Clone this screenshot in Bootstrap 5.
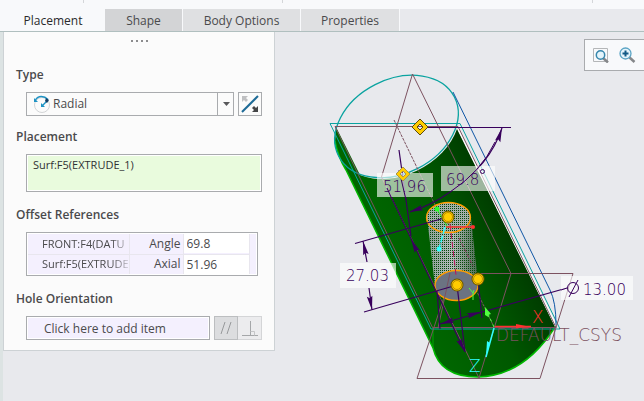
<!DOCTYPE html>
<html lang="en">
<head>
<meta charset="utf-8">
<meta name="viewport" content="width=device-width, initial-scale=1">
<title>Hole Placement</title>
<link rel="stylesheet" href="https://cdn.jsdelivr.net/npm/bootstrap@5.3.0/dist/css/bootstrap.min.css">
<style>
body{font-family:"Open Sans","Noto Sans",sans-serif;font-size:12px;line-height:16px;color:#4a4a4c;background:#e8e9ed}
.ribbon-edge{height:9px;background:#f8f9fb}
.ribbon-edge span{height:3px;border-right:1px solid #d4d6d9}
.g1{width:84px}.g2{width:199px}.g3{width:310px}
.dash-tabs{height:23px;padding-left:2px;gap:1px;border-bottom:1px solid #b0bfbf;box-shadow:inset 400px 0 #f8f9fb}
.dash-tabs .nav-link{height:22px;padding:0;border:0;border-radius:0;background:#dfe0e2;color:#4a4a4c;line-height:24px;width:98px}
.dash-tabs .nav-link.active{background:#f8f9fb;color:#2a2a2c;width:102px}
.dash-tabs .t-shape{background:#d3d4d6;width:77px}
.dash-tabs .t-body{width:117px}
.gutter{width:3px;background:#dce3e3}
.slide{width:272px;background:#fbfbfb;border:1px solid #cdd2d5;border-top:0;padding:0 12px 10px}
.grip{height:34px;padding-top:8px;gap:3px}
.grip i{width:2px;height:2px;background:#8c8c8e}
.sec{font-size:12px;font-weight:600;line-height:18px;margin:0 0 8px}
.sec-body{margin:0 0 14px 10px}
.sec-body.tight{margin-bottom:12px}
.sec-body:last-child{margin-bottom:0}
.ctl{border:1px solid #a9abae;border-radius:0;background:#fbfbfb;color:#4a4a4c;font-size:12px;line-height:16px;height:24px;padding:0}
.kind{padding-left:26px;appearance:none;outline:0}
.kind-icon{left:7px;top:3px}
.kind-arrow{right:0;top:0;width:17px;height:24px;border-left:1px solid #a9abae;pointer-events:none}
.sq{width:24px;flex:none}
.pick{height:38px;background:#e9fbdd;border:1px solid #a9abae;box-shadow:inset 0 0 0 1px #fff;padding:2px 6px;resize:none;font-size:11px;line-height:16px;color:#303234;overflow:hidden;border-radius:0}
.refs{border:1px solid #a9abae;margin-right:4px;padding:1px 7px 1px 1px;background:#f4f0fe;box-shadow:inset 0 0 0 1px #fff}
.refs table{table-layout:fixed}
.refs td,.refs th{height:20px;padding:0;border-right:1px solid #e8e6ee;border-bottom:1px solid #e8e6ee;font-weight:400}
.refs tr:last-child>*{border-bottom:0}
.refs th{padding-left:14px;width:101px;font-size:11px}
.refs .clip{display:block;white-space:nowrap;-webkit-mask-image:linear-gradient(90deg,#000 80%,#0003);mask-image:linear-gradient(90deg,#000 80%,#0003)}
.refs .dim{width:54px;text-align:right;padding-right:2px}
.refs input{width:100%;height:19px;border:0;padding:0 3px;background:#fff;color:#4a4a4c;display:block}
.orient{background:#f4f0fe;padding-left:17px;box-shadow:inset 0 0 0 1px #fff;min-width:0}
.par{background:#dcdddf;border-color:#bcbec0}
.perp{background:#ececee;border-color:#d4d5d7;border-left:0}
.view-tools{top:7px;right:0;height:32px;padding:0 8px;gap:10px;background:#f8f9fb;border:1px solid #a9abae;border-right:0}
.view-tools button{border:0;background:none;padding:0;line-height:0}
.dimtext text{font-family:"DejaVu Sans Light","DejaVu Sans",sans-serif;font-weight:200;font-size:15px}
.dimtext .axis{font-size:17px}
</style>
<script src="https://cdn.jsdelivr.net/npm/bootstrap@5.3.0/dist/js/bootstrap.bundle.min.js"></script>
</head>
<body class="vh-100 d-flex flex-column overflow-hidden">
<div class="ribbon-edge d-flex flex-shrink-0"><span class="g1"></span><span class="g2"></span><span class="g3"></span></div>
<nav class="nav dash-tabs flex-nowrap flex-shrink-0">
  <button type="button" class="nav-link active">Placement</button>
  <button type="button" class="nav-link t-shape">Shape</button>
  <button type="button" class="nav-link t-body">Body Options</button>
  <button type="button" class="nav-link">Properties</button>
</nav>
<main class="d-flex flex-grow-1 overflow-hidden">
  <div class="gutter flex-shrink-0"></div>
  <form class="slide flex-shrink-0 align-self-start">
    <div class="grip d-flex justify-content-center"><i></i><i></i><i></i><i></i></div>
    <label class="sec d-block" for="kind">Type</label>
    <div class="sec-body tight d-flex gap-1">
      <div class="position-relative flex-grow-1">
        <select id="kind" class="ctl kind w-100 d-block"><option>Radial</option></select>
        <svg class="kind-icon position-absolute" width="18" height="18" viewBox="0 0 18 18" fill="none" aria-hidden="true"><circle cx="9" cy="10" r="7.500" stroke="#d2d4d6"/><path d="M2.500 5C5 .5 11 .5 15 4.500" stroke="#1f93c4" stroke-width="1.500"/><path d="M1 3v4h4zM8 8v4h4z" fill="#1f93c4"/><path d="m9 11 5-5" stroke="#1f93c4" stroke-width="1.500"/><path d="m13 3 3 2-2 3-2-2z" fill="#123f66"/></svg>
        <span class="kind-arrow position-absolute d-flex align-items-center justify-content-center"><svg width="7" height="4" aria-hidden="true"><path d="M0 0h7L3.500 4z" fill="#58595b"/></svg></span>
      </div>
      <button type="button" class="ctl sq d-flex align-items-center justify-content-center" aria-label="Flip"><svg width="18" height="18" viewBox="0 0 18 18" aria-hidden="true"><path d="M1 17 17 1" stroke="#1d6a96" stroke-width="2"/><path d="M1 1h6L5 3l2 2-2 2-2-2-2 2z" fill="#bfc0c2"/><path d="M17 17h-6l2-2-2-2 2-2 2 2 2-2z" fill="#444547"/></svg></button>
    </div>
    <label class="sec d-block" for="place">Placement</label>
    <div class="sec-body"><textarea id="place" class="pick w-100 d-block" readonly>Surf:F5(EXTRUDE_1)</textarea></div>
    <div class="sec">Offset References</div>
    <div class="sec-body">
      <div class="refs"><table class="w-100">
        <tr><th scope="row"><span class="clip">FRONT:F4(DATU</span></th><td class="dim">Angle</td><td><input aria-label="Angle" value="69.8"></td></tr>
        <tr><th scope="row"><span class="clip">Surf:F5(EXTRUDE</span></th><td class="dim">Axial</td><td><input aria-label="Axial" value="51.96"></td></tr>
      </table></div>
    </div>
    <label class="sec d-block" for="orient">Hole Orientation</label>
    <div class="sec-body d-flex">
      <input id="orient" class="ctl orient flex-grow-1 me-1" value="Click here to add item" readonly>
      <button type="button" class="ctl sq par d-flex align-items-center justify-content-center" aria-label="Parallel"><svg width="14" height="14" stroke="#97999b" aria-hidden="true"><path d="m2 13 4-12M8 13l4-12"/></svg></button>
      <button type="button" class="ctl sq perp d-flex align-items-center justify-content-center" aria-label="Perpendicular"><svg width="18" height="18" fill="none" stroke="#a5a7a9" aria-hidden="true"><path d="M1 16.500h16M9.500 2v14" /><path d="M9.500 12.500h4v4" stroke="#c4c5c7"/></svg></button>
    </div>
  </form>
  <div class="position-relative flex-grow-1">
    <svg class="w-100 h-100 d-block" viewBox="275 32 369 369" preserveAspectRatio="xMinYMin meet" role="img" aria-label="Model view">
      <defs>
        <linearGradient id="body" gradientUnits="userSpaceOnUse" x1="400" y1="270" x2="505" y2="220"><stop offset="0" stop-color="#006600"/><stop offset=".55" stop-color="#005800"/><stop offset="1" stop-color="#003c00"/></linearGradient>
        <linearGradient id="tube" x1="0" x2="1"><stop offset="0" stop-color="#8aa095"/><stop offset=".5" stop-color="#b4bcbc"/><stop offset="1" stop-color="#4a6a50"/></linearGradient>
        <pattern id="holes" width="2" height="2" patternUnits="userSpaceOnUse"><path d="M0 0h1v1H0z" fill="#064a0a"/></pattern>
        <g id="knob"><circle r="6.500" fill="#6a5600"/><circle r="5.500" fill="#ffcc00"/><circle r="4.500" fill="none" stroke="#a87f00" stroke-width=".8"/></g>
        <path id="tip" d="M0 0-4-.8-14-2.800-12 0-14 2.800-4 .8z" fill="#38005c"/>
      </defs>
      <path d="M336 127 335 141Q338 157 346 170L433 348Q440 377 478 377 524 376 555 327L457 129A65 47-27 0 1 360 175z" fill="url(#body)"/>
      <path d="M335 141Q338 157 346 170L433 348Q440 377 478 377 524 376 555 327" fill="none" stroke="#00b800" stroke-width="1.500"/>
      <path d="M433 328v20" stroke="#00a800"/>
      <path d="M458.500 129 556 326" stroke="#fff" stroke-width="2"/>
      <g fill="none" stroke="#0aa3a0">
        <ellipse cx="396.500" cy="126.500" rx="65" ry="47" transform="rotate(-27 396.500 126.500)" stroke-width="1.300"/>
        <path d="M330 123.500h130l100 205.500H431z"/>
      </g>
      <path d="M453 92 550 290Q556 302 556 325" fill="none" stroke="#0f56a5"/>
      <g fill="none" stroke="#7c5260" stroke-width="1">
        <path d="M335 126.500h123l98 201H432.500zM412.500 74 381.500 177 479 378 494.500 327 511 273.500z"/>
        <path d="M394 120 494 327" stroke-dasharray="3 1"/><path d="M447 273.500h126L540 378.500H417L452 273"/>
      </g>
      <path d="M427 217 435 286A21.500 15 0 0 0 478 282L470.500 214z" fill="url(#tube)"/>
      <ellipse cx="448.500" cy="217.500" rx="22" ry="15" fill="#a4aeac"/>
      <path d="M427 217A22 15 0 0 1 470.500 214L478 282 435 286z" fill="url(#holes)"/>
      <path d="M459 238 473 266" stroke="#8c3a60" stroke-dasharray="4 2"/>
      <ellipse cx="456.500" cy="285.500" rx="21.500" ry="15" fill="#6b7382" stroke="#ff9d00" stroke-width="1.300"/>
      <ellipse cx="448.500" cy="217.500" rx="22" ry="15" fill="none" stroke="#ff9d00" stroke-width="1.300"/>
      <path d="M450 224 456 275" stroke="#c0105c" stroke-dasharray="6 3"/>
      <path d="m450 273-12 55" stroke="#7c5260" fill="none"/>
      <g stroke="#38005c" stroke-width="1.200" fill="none">
        <path d="M424 127.500h87M502 128Q490 165 450 192 432 205 410 212M399 150 406 200 411 236M387 188 465 352M355 243.500 448 217M364 312 457 285M363 241 367 262M369 288 372 310M457 285 465 352M478 279 482 318M437 291 440 329M440 324 567 288"/>
      </g>
      <use href="#tip" transform="translate(502 128) rotate(-72)"/><use href="#tip" transform="translate(409 212) rotate(162)"/>
      <use href="#tip" transform="translate(411 239) rotate(-116)"/><use href="#tip" transform="translate(465 352) rotate(64)"/>
      <use href="#tip" transform="translate(363 241) rotate(-102)"/><use href="#tip" transform="translate(372 310) rotate(80)"/>
      <use href="#tip" transform="translate(440 324) rotate(164)"/><use href="#tip" transform="translate(481 312) rotate(-16)"/>
      <path d="M437 209 448 228" stroke="#2bff2b"/><circle cx="437" cy="209" r="2.500" fill="#2bff2b"/>
      <path d="M446 227h26" stroke="#ff3030" stroke-width="1.500"/><circle cx="473" cy="227" r="2" fill="#ff3030"/>
      <path d="M445 227 439 249" stroke="#30ffff" stroke-width="1.500" stroke-dasharray="7 2"/><circle cx="439" cy="249" r="2.500" fill="#30ffff"/>
      <path d="M494 327 484 305" stroke="#50ff40" stroke-dasharray="3 3"/><path d="m485 307 6 7-3 1 2 3-5-3z" fill="#50ff40"/>
      <path d="M495 326.500h36" stroke="#ff3030" stroke-width="1.500"/><path d="m531 327-15-3v4z" fill="#ff3030"/>
      <path d="M494 328 486 357" stroke="#30ffff" stroke-width="1.500"/><path d="m486 356 1-15 3 2z" fill="#30ffff"/>
      <g fill="#fff" fill-opacity=".62"><path d="M377 173h56v24h-56zM441 166h54v25h-54zM340 263h56v25h-56zM561 276h72v24h-72z"/></g>
      <path d="M399 170 406 200M387 188 391 197M495 142Q481 172 450 192M561 290 567 288" fill="none" stroke="#38005c"/>
      <g class="dimtext" fill="#38005c">
        <text x="383" y="192">51.96</text><text x="446" y="185">69.8</text><text x="346" y="281">27.03</text><text x="583" y="295">13.00</text>
        <g fill="none" stroke="#38005c"><circle cx="482.500" cy="171.500" r="2"/><circle cx="573" cy="288" r="5.500"/><path d="m569 297 9-17"/></g>
        <text class="axis" x="496" y="341" fill="#7c5260">DEFAULT_CSYS</text>
        <text class="axis" x="532" y="323" fill="#ff3030">X</text><text class="axis" x="469" y="372" fill="#30ffff">Z</text><path d="m469 288 4 5v7m0-7 1-3" stroke="#50ff40" fill="none"/>
      </g>
      <g stroke="#5c4c10" fill="#ffcc00"><path fill-rule="evenodd" d="m420 119 8 8-8 8-8-8zm0 5-3 3 3 3 3-3z"/><path d="m403 167 7 7-7 7-7-7zm0 4-3 3 3 3 3-3z" fill-rule="evenodd" stroke="#a8964a"/></g>
      <use href="#knob" x="448" y="217"/><use href="#knob" x="457" y="285"/><use href="#knob" x="478" y="279"/>
    </svg>
    <div class="view-tools position-absolute d-flex align-items-center">
      <button type="button" aria-label="Refit"><svg width="16" height="16" viewBox="0 0 16 16" fill="none"><path d="M.5 1.500h14v13H.5z" stroke="#b4b6b8"/><path d="m10 11 5 4.500" stroke="#85878a" stroke-width="2.500"/><circle cx="7.500" cy="8" r="4.200" fill="#e4f4fb" stroke="#3787ad" stroke-width="1.500"/></svg></button>
      <button type="button" aria-label="Zoom in"><svg width="17" height="16" viewBox="0 0 17 16" fill="none"><path d="m10 10 5.500 5" stroke="#85878a" stroke-width="2.500"/><circle cx="6.500" cy="6.500" r="5.500" fill="#e4f4fb" stroke="#5aa3c4" stroke-width="1.300"/><path d="M3.500 6.500h6M6.500 3.500v6" stroke="#135a86" stroke-width="2"/></svg></button>
    </div>
  </div>
</main>
</body>
</html>
